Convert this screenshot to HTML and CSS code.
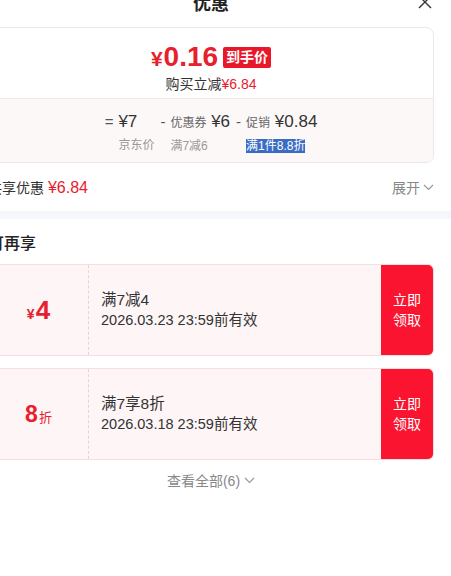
FILE: index.html
```html
<!DOCTYPE html>
<html lang="zh-CN">
<head>
  <meta charset="UTF-8" />
  <meta name="viewport" content="width=device-width, initial-scale=1.0"/>
  <title>优惠</title>
  <link rel="stylesheet" href="styles.css">
</head>
<body>

  <div class="sheet">
    <div class="head">
      <span></span>
      <h1>优惠</h1>
      <svg class="close" width="14" height="14" viewBox="0 0 14 14">
        <path d="M1 1L13 13M13 1L1 13" stroke="#333" stroke-width="1.4" fill="none"/>
      </svg>
    </div>

    <!-- price card -->
    <div class="card">
      <div class="card-top">
        <div class="price-line">
          <span class="price"><span class="yen">¥</span>0.16</span>
          <span class="badge">到手价</span>
        </div>
        <p class="save">购买立减<span class="red">¥6.84</span></p>
      </div>
      <div class="card-bottom">
        <div class="calc">
          <span class="op first">=</span>
          <div class="col">
            <span class="val">¥7</span>
            <span class="tip">京东价</span>
          </div>
          <span class="op">-</span>
          <div class="col">
            <span class="val"><em>优惠券</em> ¥6</span>
            <span class="tip">满7减6</span>
          </div>
          <span class="op">-</span>
          <div class="col">
            <span class="val"><em>促销</em> ¥0.84</span>
            <span class="tip"><span class="sel">满1件8.8折</span></span>
          </div>
        </div>
      </div>
    </div>

    <div class="total-row">
      <span>共享优惠 <span class="total">¥6.84</span></span>
      <span class="more">展开
        <svg width="11" height="7" viewBox="0 0 11 7"><path d="M1 1L5.5 5.5L10 1" stroke="#999" stroke-width="1.2" fill="none"/></svg>
      </span>
    </div>

    <div class="band"></div>

    <div class="section">
      <h2>可再享</h2>

      <div class="coupon">
        <div class="c-left"><span class="c-yen">¥</span><span class="c-num">4</span></div>
        <div class="c-mid">
          <p class="c-title">满7减4</p>
          <p class="c-date">2026.03.23 23:59前有效</p>
        </div>
        <div class="c-btn">立即<br>领取</div>
      </div>

      <div class="coupon">
        <div class="c-left"><span class="c-num small">8</span><span class="c-unit">折</span></div>
        <div class="c-mid">
          <p class="c-title">满7享8折</p>
          <p class="c-date">2026.03.18 23:59前有效</p>
        </div>
        <div class="c-btn">立即<br>领取</div>
      </div>

      <div class="view-all">查看全部(6)
        <svg width="11" height="7" viewBox="0 0 11 7"><path d="M1 1L5.5 5.5L10 1" stroke="#999" stroke-width="1.2" fill="none"/></svg>
      </div>
    </div>
  </div>

</body>
</html>
```

FILE: styles.css
```css
* {
  margin: 0;
  padding: 0;
  box-sizing: border-box;
}

html, body {
  overflow: hidden;
}

body {
  background: #fff;
  color: #333;
  font-family: "Liberation Sans", "Noto Sans CJK SC", sans-serif;
}

.sheet {
  width: 480px;
  margin-left: -29px;
}

.head {
  display: grid;
  grid-template-columns: 1fr auto 1fr;
  align-items: center;
  height: 50px;
  margin-top: -23px;
  padding: 0 19px;
}

.head h1 {
  font-size: 18px;
  font-weight: 700;
  color: #222;
}

.close {
  justify-self: end;
}

.card {
  margin: 0 17px;
  border: 1px solid #f1e6e7;
  border-radius: 8px;
  overflow: hidden;
}

.card-top {
  height: 70px;
  display: flex;
  flex-direction: column;
  align-items: center;
  justify-content: center;
  padding-top: 8px;
}

.price-line {
  display: flex;
  align-items: center;
  height: 34px;
}

.price {
  color: #e8202e;
  font-size: 28px;
  font-weight: 700;
}

.yen {
  font-size: 21px;
  margin-right: 1px;
}

.badge {
  background: #e8182a;
  color: #fff;
  font-size: 14px;
  font-weight: 700;
  line-height: 21px;
  padding: 0 3px;
  border-radius: 2px;
  margin-left: 5px;
}

.save {
  font-size: 14px;
  line-height: 20px;
  color: #333;
}

.red {
  color: #e8202e;
}

.card-bottom {
  height: 64px;
  border-top: 1px solid #f6e9ea;
  background: #fdf8f8;
  display: flex;
  justify-content: center;
  align-items: center;
  padding-top: 5px;
}

.calc {
  display: flex;
  align-items: flex-start;
}

.op {
  font-size: 15px;
  line-height: 22px;
  color: #555;
  margin: 0 5px 0 6px;
}

.op.first {
  margin-left: 0;
}

.col {
  display: flex;
  flex-direction: column;
  align-items: flex-start;
}

.val {
  font-size: 17px;
  line-height: 22px;
  color: #333;
  white-space: nowrap;
}

.val em {
  font-style: normal;
  font-size: 12px;
  color: #666;
}

.tip {
  font-size: 12px;
  line-height: 20px;
  color: #999;
  margin-top: 2px;
  white-space: nowrap;
}

.sel {
  background: #3a6cc3;
  color: #fff;
}

.total-row {
  height: 48px;
  padding: 0 17px;
  display: flex;
  justify-content: space-between;
  align-items: center;
  font-size: 14px;
  color: #333;
}

.total {
  color: #e8202e;
  font-size: 16px;
}

.more {
  color: #888;
  display: flex;
  align-items: center;
  gap: 3px;
}

.band {
  height: 8px;
  background: #f5f7fb;
}

.section {
  padding: 0 17px;
}

.section h2 {
  font-size: 16px;
  font-weight: 500;
  color: #222;
  line-height: 22px;
  padding-top: 14px;
  margin-bottom: 9px;
}

.coupon {
  display: flex;
  height: 92px;
  margin-bottom: 12px;
  border: 1px solid #f5dde1;
  border-radius: 6px;
  background: #fdf5f6;
  overflow: hidden;
}

.c-left {
  width: 100px;
  border-right: 1px dashed #eecfd4;
  display: flex;
  justify-content: center;
  align-items: baseline;
  padding-top: 30px;
  color: #e8202e;
  font-weight: 700;
}

.c-yen {
  font-size: 14px;
  margin-right: 1px;
}

.c-num {
  font-size: 26px;
  line-height: 30px;
}

.c-num.small {
  font-size: 23px;
}

.c-unit {
  font-size: 13px;
  font-weight: 400;
  margin-left: 1px;
}

.c-mid {
  flex: 1;
  padding-left: 12px;
  display: flex;
  flex-direction: column;
  justify-content: center;
  line-height: 21px;
  color: #333;
}

.c-title {
  font-size: 15.5px;
}

.c-date {
  font-size: 14.5px;
}

.c-btn {
  width: 52px;
  background: #fa1430;
  color: #fff;
  font-size: 14px;
  line-height: 20px;
  display: flex;
  align-items: center;
  justify-content: center;
  text-align: center;
}

.view-all {
  height: 30px;
  margin-top: -7px;
  display: flex;
  justify-content: center;
  align-items: center;
  gap: 4px;
  font-size: 14px;
  color: #888;
}
```
